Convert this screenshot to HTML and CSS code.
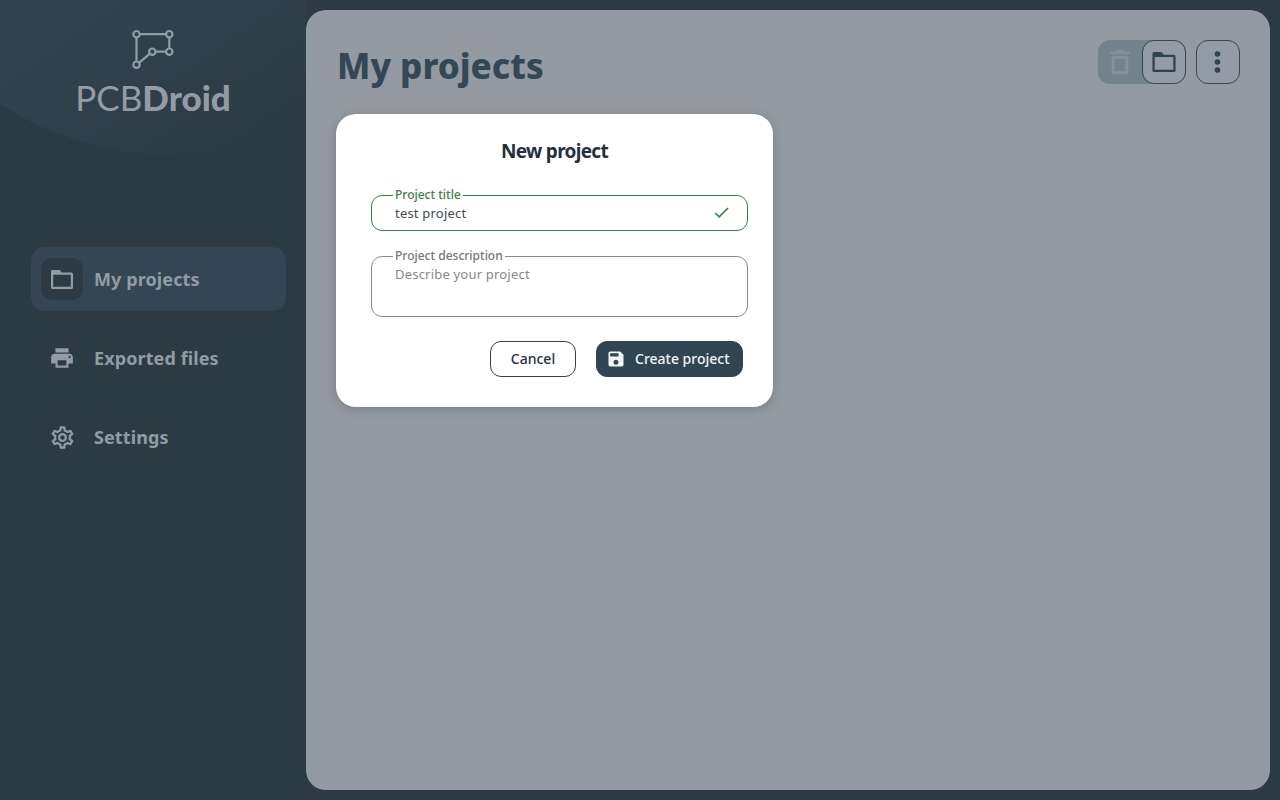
FILE: index.html
```html
<!DOCTYPE html>
<html lang="en">
<head>
    <meta charset="UTF-8">
    <meta name="viewport" content="width=device-width, initial-scale=1.0">
    <title>PCBDroid - My projects</title>
    <link rel="stylesheet" href="styles.css">
</head>
<body>
    <aside class="sidebar">
        <div class="logo">
            <svg width="44" height="42" viewBox="0 0 44 42" fill="none" stroke="#939ca5" stroke-width="2.2">
                <path d="M8.500 5.200H35.300M38.300 8.200V19.700M35.300 22.700H24.300M19 24.600L7.900 33.800M5.500 8.200V32.700"/>
                <circle cx="5.500" cy="5.200" r="3.200"/>
                <circle cx="38.300" cy="5.200" r="3.200"/>
                <circle cx="38.300" cy="22.700" r="3.200"/>
                <circle cx="21.300" cy="22.700" r="3.200"/>
                <circle cx="5.500" cy="35.700" r="3.200"/>
            </svg>
            <div class="logo-text"><span>PCB</span><b>Droid</b></div>
        </div>

        <nav class="menu">
            <a class="menu-item active">
                <span class="menu-icon">
                    <svg width="22" height="19" viewBox="0 0 22 19"><path fill-rule="evenodd" d="M1.500 0H8.500L11 2.500H20.500Q22 2.500 22 4V17.500Q22 19 20.500 19H1.500Q0 19 0 17.500V1.500Q0 0 1.500 0zM2.200 4.700V16.800H19.800V4.700z"/></svg>
                </span>
                <span class="menu-label">My projects</span>
            </a>
            <a class="menu-item">
                <span class="menu-icon">
                    <svg width="26" height="26" viewBox="0 0 24 24"><path d="M19 8H5c-1.660 0-3 1.340-3 3v6h4v4h12v-4h4v-6c0-1.660-1.340-3-3-3zm-3 11H8v-5h8v5zm3-7c-.55 0-1-.45-1-1s.45-1 1-1 1 .45 1 1-.45 1-1 1zm-1-9H6v4h12V3z"/></svg>
                </span>
                <span class="menu-label">Exported files</span>
            </a>
            <a class="menu-item">
                <span class="menu-icon">
                    <svg width="27" height="27" viewBox="0 0 24 24"><path d="M19.43 12.98c.04-.32.07-.64.07-.98 0-.34-.03-.66-.07-.98l2.110-1.650c.19-.15.24-.42.12-.64l-2-3.460c-.09-.16-.26-.25-.44-.25-.06 0-.12.01-.17.03l-2.490 1c-.52-.4-1.080-.73-1.690-.98l-.38-2.650C14.460 2.180 14.250 2 14 2h-4c-.25 0-.46.18-.49.42l-.38 2.650c-.61.25-1.170.59-1.690.98l-2.490-1c-.06-.02-.12-.03-.18-.03-.17 0-.34.09-.43.25l-2 3.460c-.13.22-.07.49.12.64l2.110 1.650c-.04.32-.07.65-.07.98 0 .33.03.66.07.98l-2.110 1.650c-.19.15-.24.42-.12.64l2 3.460c.09.16.26.25.44.25.06 0 .12-.01.17-.03l2.490-1c.52.4 1.080.73 1.690.98l.38 2.650c.03.24.24.42.49.42h4c.25 0 .46-.18.49-.42l.38-2.650c.61-.25 1.170-.59 1.690-.98l2.490 1c.06.02.12.03.18.03.17 0 .34-.09.43-.25l2-3.460c.12-.22.07-.49-.12-.64l-2.110-1.650zm-1.980-1.710c.04.31.05.52.05.73 0 .21-.02.43-.05.73l-.14 1.130.89.7 1.080.84-.7 1.210-1.270-.51-1.040-.42-.9.68c-.43.32-.84.56-1.250.73l-1.060.43-.16 1.130-.2 1.350h-1.400l-.19-1.350-.16-1.130-1.060-.43c-.43-.18-.83-.41-1.230-.71l-.91-.7-1.060.43-1.270.51-.7-1.210 1.080-.84.89-.7-.14-1.130c-.03-.31-.05-.54-.05-.74s.02-.43.05-.73l.14-1.130-.89-.7-1.080-.84.7-1.210 1.270.51 1.040.42.9-.68c.43-.32.84-.56 1.250-.73l1.060-.43.16-1.130.2-1.350h1.390l.19 1.350.16 1.130 1.060.43c.43.18.83.41 1.230.71l.91.7 1.060-.43 1.270-.51.7 1.210-1.070.85-.89.7.14 1.130zM12 8c-2.210 0-4 1.790-4 4s1.790 4 4 4 4-1.790 4-4-1.790-4-4-4zm0 6c-1.100 0-2-.9-2-2s.9-2 2-2 2 .9 2 2-.9 2-2 2z"/></svg>
                </span>
                <span class="menu-label">Settings</span>
            </a>
        </nav>
    </aside>

    <main class="content">
        <header class="content-header">
            <h1>My projects</h1>
            <div class="tools">
                <div class="toggle">
                    <span class="trash">
                        <svg width="20" height="24" viewBox="0 0 20 24"><path fill-rule="evenodd" d="M6 0H14L15 1.500H20V4H0V1.500H5zM1.700 6H18.300V24H1.700zM4.700 9V21.200H15.300V9z"/></svg>
                    </span>
                    <span class="tool-button">
                        <svg class="folder-big" width="24" height="20" viewBox="0 0 22 19"><path fill-rule="evenodd" d="M1.500 0H8.500L11 2.500H20.500Q22 2.500 22 4V17.500Q22 19 20.500 19H1.500Q0 19 0 17.500V1.500Q0 0 1.500 0zM2.200 4.700V16.800H19.800V4.700z"/></svg>
                    </span>
                </div>
                <span class="tool-button">
                    <svg width="32" height="32" viewBox="0 0 32 32"><circle cx="15.500" cy="8" r="2.800"/><circle cx="15.500" cy="16" r="2.800"/><circle cx="15.500" cy="24" r="2.800"/></svg>
                </span>
            </div>
        </header>

        <form class="dialog">
            <h2>New project</h2>
            <fieldset class="field field-valid">
                <legend>Project title</legend>
                <span class="value">test project</span>
                <svg width="19" height="19" viewBox="0 0 24 24"><path d="M9 16.170L4.830 12l-1.420 1.410L9 19 21 7l-1.410-1.410z"/></svg>
            </fieldset>
            <fieldset class="field field-area">
                <legend>Project description</legend>
                <span class="placeholder">Describe your project</span>
            </fieldset>
            <div class="actions">
                <button type="button" class="btn-cancel">Cancel</button>
                <button type="button" class="btn-create">
                    <svg width="20" height="20" viewBox="0 0 24 24"><path d="M17 3H5c-1.110 0-2 .9-2 2v14c0 1.100.89 2 2 2h14c1.100 0 2-.9 2-2V7l-4-4zm-5 16c-1.660 0-3-1.340-3-3s1.340-3 3-3 3 1.340 3 3-1.340 3-3 3zm3-10H5V5h10v4z"/></svg>
                    <span>Create project</span>
                </button>
            </div>
        </form>
    </main>
</body>
</html>
```
FILE: styles.css
```css
* {
    box-sizing: border-box;
}

body {
    display: flex;
    height: 100vh;
    margin: 0;
    overflow: hidden;
    font-family: "Noto Sans", "Open Sans", sans-serif;
    background-color: #2c3b43;
    color: #939ba2;
}

.sidebar {
    width: 306px;
    flex-shrink: 0;
    background: radial-gradient(circle 310px at 170px -155px, transparent 309px, #2c3b43 310px),
                linear-gradient(145deg, #30434f 0, #30424d 90px, #2c3b43 260px);
    background-size: 306px 247px;
    background-repeat: no-repeat;
}

.logo {
    display: flex;
    flex-direction: column;
    align-items: center;
    height: 247px;
    padding-top: 29px;
}

.logo-text {
    font-family: Lato, sans-serif;
    font-size: 35px;
    line-height: 40px;
    margin-top: 6px;
    white-space: nowrap;
    color: #939ca5;
}

.logo-text b {
    font-weight: 900;
}

.menu {
    display: flex;
    flex-direction: column;
    gap: 15px;
    padding: 0 20px 0 31px;
}

.menu-item {
    display: flex;
    align-items: center;
    gap: 11px;
    height: 64px;
    padding-left: 10px;
    border-radius: 14px;
}

.menu-item.active {
    background-color: #344654;
}

.menu-icon {
    display: flex;
    align-items: center;
    justify-content: center;
    width: 42px;
    height: 42px;
    border-radius: 11px;
    fill: #939ca5;
}

.active .menu-icon {
    background-color: #2c3b43;
}

.menu-label {
    font-size: 18px;
    font-weight: 700;
    letter-spacing: 0.1px;
    white-space: nowrap;
}

.content {
    position: relative;
    flex: 1;
    margin: 10px 10px 10px 0;
    border-radius: 20px;
    background-color: #939aa1;
}

.content-header {
    display: flex;
    justify-content: space-between;
    padding: 30px 30px 0 31px;
}

h1 {
    margin: 0;
    font-size: 35px;
    line-height: 51px;
    font-weight: 800;
    color: #344754;
}

.tools {
    display: flex;
    gap: 10px;
}

.toggle {
    display: flex;
    height: 44px;
    border-radius: 12px;
    background-color: #74838b;
}

.trash {
    display: flex;
    align-items: center;
    justify-content: center;
    width: 44px;
    fill: #84919a;
}

.tool-button {
    display: flex;
    align-items: center;
    justify-content: center;
    width: 44px;
    height: 44px;
    border: 1px solid #344754;
    border-radius: 12px;
    background-color: #939ca4;
    fill: #304552;
}

.folder-big {
    margin-right: 1px;
}

.dialog {
    position: absolute;
    left: 30px;
    top: 104px;
    width: 437px;
    height: 293px;
    padding: 22px 25px 0 35px;
    border-radius: 20px;
    background-color: #fff;
    box-shadow: 0 2px 10px rgba(50, 65, 75, 0.3);
}

h2 {
    margin: 0 10px 0 0;
    font-size: 19px;
    line-height: 30px;
    font-weight: 700;
    text-align: center;
    letter-spacing: -0.7px;
    color: #1f313d;
}

.field {
    display: flex;
    height: 43px;
    min-width: 0;
    margin: 22px 0 0;
    padding: 0 16px 0 21px;
    border: 1px solid #8a8d90;
    border-radius: 11px;
    font-size: 13px;
}

.field legend {
    height: 15px;
    padding: 0 2px;
    font-size: 12px;
    line-height: 13px;
    font-weight: 500;
    color: #74787c;
}

.value,
.placeholder {
    padding-left: 2px;
    line-height: 20px;
    letter-spacing: 0.2px;
}

.value {
    flex: 1;
    color: #414c55;
}

.placeholder {
    color: #85898d;
}

.field-valid {
    border-color: #398341;
}

.field-valid legend {
    color: #398341;
}

.field-valid svg {
    fill: #398341;
}

.field-area {
    height: 68px;
    margin-top: 18px;
}

.actions {
    display: flex;
    justify-content: flex-end;
    gap: 20px;
    margin: 24px 5px 0 0;
}

.actions button {
    height: 36px;
    padding: 0 0 1px;
    border: 1px solid #304552;
    border-radius: 11px;
    font: 500 14px "Noto Sans", sans-serif;
    white-space: nowrap;
}

.btn-cancel {
    width: 86px;
    background-color: #fff;
    color: #1f313d;
}

.actions .btn-create {
    display: flex;
    align-items: center;
    gap: 9px;
    width: 147px;
    padding-left: 9px;
    background-color: #304552;
    color: #f2f5f7;
}

.btn-create svg {
    fill: #f2f5f7;
}
```
